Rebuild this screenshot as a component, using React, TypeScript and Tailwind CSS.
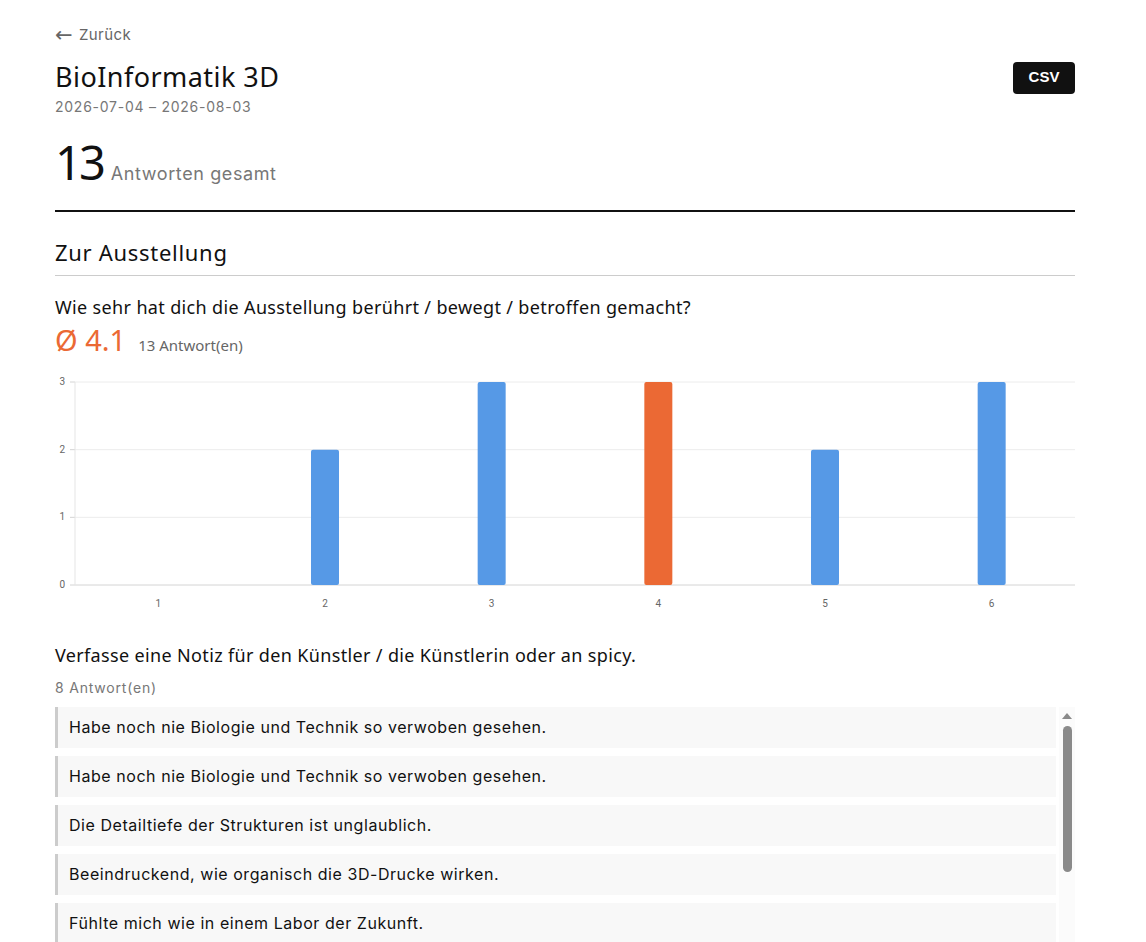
import React from "react";

const heading = "font-['Noto_Sans','DejaVu_Sans',sans-serif]";
const body = "font-['Inter','Noto_Sans',sans-serif]";

const counts = [0, 2, 3, 3, 2, 3];
const notes = [
    "Habe noch nie Biologie und Technik so verwoben gesehen.",
    "Habe noch nie Biologie und Technik so verwoben gesehen.",
    "Die Detailtiefe der Strukturen ist unglaublich.",
    "Beeindruckend, wie organisch die 3D-Drucke wirken.",
    "Fühlte mich wie in einem Labor der Zukunft.",
    "Die Lichtinstallation hat mich sehr berührt.",
    "Spannend, wie Daten zu Skulpturen werden.",
    "Gerne mehr davon!",
];

function BarChart() {
    const left = 20;
    const right = 1020;
    const top = 7;
    const bottom = 210;
    const unit = (bottom - top) / 3;
    const slot = (right - left) / counts.length;
    return (
        <svg width="1020" height="240" className="block">
            {[0, 1, 2, 3].map((v) => (
                <g key={v}>
                    <line x1={left} x2={right} y1={bottom - v * unit} y2={bottom - v * unit} stroke={v === 0 ? "#d4d4d4" : "#ececec"} strokeWidth="1" />
                    <line x1={left - 5} x2={left} y1={bottom - v * unit} y2={bottom - v * unit} stroke="#d4d4d4" />
                    <text x={left - 10} y={bottom - v * unit + 3} fontSize="10" fill="#666" textAnchor="end" fontFamily="Roboto, sans-serif">{v}</text>
                </g>
            ))}
            <line x1={left} x2={left} y1={top} y2={bottom} stroke="#e5e5e5" />
            {counts.map((c, i) => {
                const cx = left + slot * i + slot / 2;
                const h = c * unit;
                return (
                    <g key={i}>
                        {c > 0 && (
                            <rect x={cx - 14} y={bottom - h} width="28" height={h} rx="2" fill={i === 3 ? "#eb6934" : "#5699e6"} />
                        )}
                        <text x={cx} y={bottom + 22} fontSize="10" fill="#666" textAnchor="middle" fontFamily="Roboto, sans-serif">{i + 1}</text>
                    </g>
                );
            })}
        </svg>
    );
}

export default function App() {
    return (
        <div className={`min-h-screen bg-white text-[#111] ${body}`}>
            <div className="w-[1020px] ml-[55px] pt-[24px]">
                <a href="#" className="flex items-center gap-[6px] text-[15px] text-[#666] tracking-[0.4px]">
                    <span className="font-['DejaVu_Sans',sans-serif] text-[21px] leading-[20px]">←</span>
                    <span>Zurück</span>
                </a>

                <div className="mt-[12px] flex items-start justify-between">
                    <div>
                        <h1 className={`${heading} text-[27px] leading-[36px] tracking-[0.45px]`}>BioInformatik 3D</h1>
                        <p className="mt-[1px] text-[14px] text-[#777] tracking-[0.75px]">2026-07-04 – 2026-08-03</p>
                    </div>
                    <button className="mt-[3px] bg-[#111] text-white text-[15px] font-bold w-[62px] h-[32px] rounded-[4px] font-['Liberation_Sans',sans-serif]">CSV</button>
                </div>

                <div className="mt-[16px] flex items-baseline gap-[8px] pb-[19px] border-b-2 border-[#111]">
                    <span className={`${heading} text-[47px] leading-[58px] tracking-[-3px]`}>13</span>
                    <span className="text-[18px] text-[#777] tracking-[0.6px]">Antworten gesamt</span>
                </div>

                <h2 className={`${heading} mt-[25px] text-[22px] leading-[30px] tracking-[0.7px] pb-[8px] border-b border-[#ccc]`}>Zur Ausstellung</h2>

                <p className={`${heading} mt-[19px] text-[18px] leading-[24px] tracking-[0.35px]`}>Wie sehr hat dich die Ausstellung berührt / bewegt / betroffen gemacht?</p>
                <div className="mt-[3px] flex items-baseline gap-[12px]">
                    <span className={`${heading} text-[29px] leading-[36px] text-[#eb6934]`}>Ø 4.1</span>
                    <span className={`${heading} text-[15px] text-[#666]`}>13 Antwort(en)</span>
                </div>

                <div className="mt-[17px]">
                    <BarChart />
                </div>

                <p className={`${heading} mt-[28px] text-[18px] leading-[24px] tracking-[0.35px]`}>Verfasse eine Notiz für den Künstler / die Künstlerin oder an spicy.</p>
                <p className="mt-[10px] text-[14px] text-[#777] tracking-[0.8px]">8 Antwort(en)</p>

                <div className="mt-[9px] flex gap-[3px]">
                    <div className="flex-1 h-[250px] overflow-hidden flex flex-col gap-[8px]">
                        {notes.map((n, i) => (
                            <div key={i} className="shrink-0 bg-[#f8f8f8] border-l-[3px] border-[#ccc] px-[11px] py-[10px] text-[16px] leading-[21px] tracking-[0.55px]">
                                {n}
                            </div>
                        ))}
                    </div>
                    <div className="w-[16px] bg-[#fbfbfb] flex flex-col items-center pt-[6px]">
                        <div className="w-0 h-0 border-l-[5px] border-r-[5px] border-b-[6px] border-l-transparent border-r-transparent border-b-[#8a8a8a]" />
                        <div className="mt-[7px] w-[9px] h-[146px] rounded-full bg-[#8a8a8a]" />
                    </div>
                </div>
            </div>
        </div>
    );
}
